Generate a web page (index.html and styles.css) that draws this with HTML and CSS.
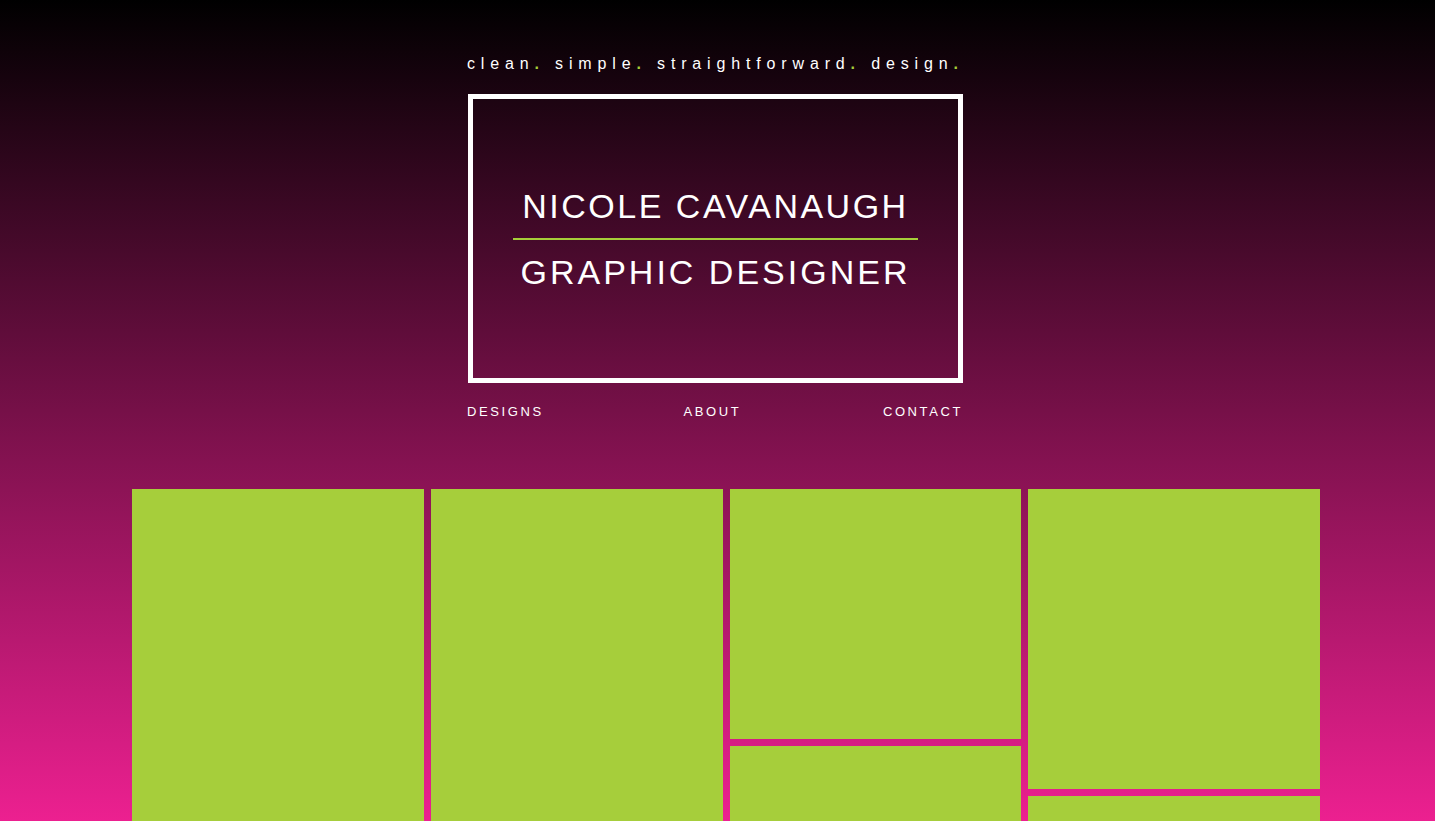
FILE: index.html
```html
<!DOCTYPE html>
<html>
<head>
<meta charset="utf-8">
<link rel="stylesheet" href="styles.css">
</head>
<body>
<header class="header">
  <p class="tagline">clean<span class="dot">.</span> simple<span class="dot">.</span> straightforward<span class="dot">.</span> design<span class="dot">.</span></p>
  <div class="frame">
    <h1 class="name">NICOLE CAVANAUGH</h1>
    <hr class="rule">
    <h2 class="title">GRAPHIC DESIGNER</h2>
  </div>
  <nav class="nav">
    <a href="#">DESIGNS</a>
    <a href="#">ABOUT</a>
    <a href="#">CONTACT</a>
  </nav>
</header>
<main class="grid">
  <div class="col"><div class="tile tall"></div></div>
  <div class="col"><div class="tile tall"></div></div>
  <div class="col"><div class="tile h250"></div><div class="tile h300"></div></div>
  <div class="col"><div class="tile h300"></div><div class="tile h250"></div></div>
</main>
</body>
</html>
```
FILE: styles.css
```css
html {
  background: #ec2090 linear-gradient(to bottom, #000000 0px, #ec2090 821px) no-repeat;
  background-size: 100% 821px;
}
body {
  margin: 0;
  font-family: "Liberation Sans", Arial, sans-serif;
  color: #fff;
}
.header {
  width: 495px;
  margin: 0 auto;
  padding-top: 55px;
  display: flex;
  flex-direction: column;
  transform: translateX(-2px);
}
.tagline {
  margin: 0 0 21px -1px;
  font-size: 16px;
  line-height: 18px;
  letter-spacing: 5.85px;
  white-space: nowrap;
}
.dot {
  color: #a6ce39;
  font-weight: bold;
}
.frame {
  height: 279px;
  border: 5px solid #fff;
  display: flex;
  flex-direction: column;
  align-items: center;
  justify-content: center;
}
.name, .title {
  margin: 0;
  font-weight: normal;
  font-size: 34px;
  line-height: 40px;
  letter-spacing: 2.8px;
}
.name { letter-spacing: 2.5px; }
.title { letter-spacing: 3px; }
.rule {
  width: 405px;
  height: 2px;
  border: 0;
  margin: 12px 0 12px 0;
  background: #a6ce39;
}
.nav {
  display: flex;
  justify-content: space-between;
  margin-top: 21px;
  margin-left: -1px;
}
.nav a {
  color: #fff;
  text-decoration: none;
  font-size: 13px;
  letter-spacing: 2.6px;
  line-height: 16px;
}
.nav a:nth-child(2) { margin-left: -2px; }
.grid {
  margin-top: 69px;
  padding-left: 132px;
  width: 1188px;
  display: grid;
  grid-template-columns: repeat(4, 1fr);
  column-gap: 7px;
}
.col {
  display: flex;
  flex-direction: column;
  gap: 7px;
}
.tile { background: #a6ce3b; }
.tall { height: 400px; }
.h250 { height: 250px; }
.h300 { height: 300px; }
```
